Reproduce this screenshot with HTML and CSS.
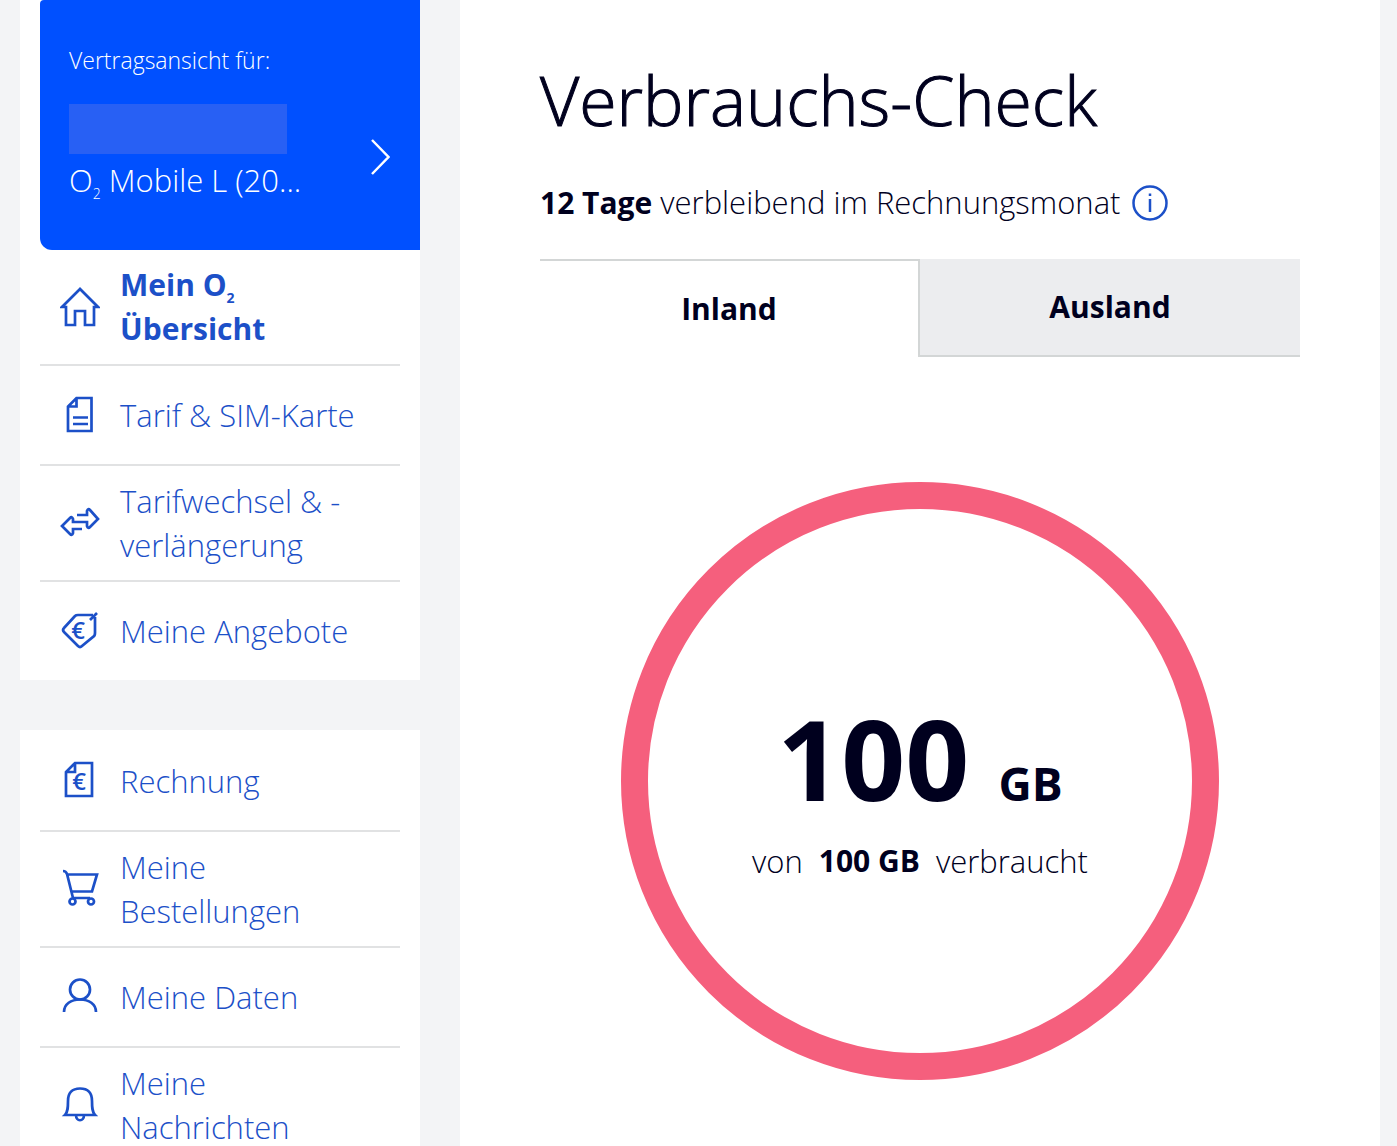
FILE: index.html
```
<!DOCTYPE html>
<html lang="de">
<head>
  <meta charset="UTF-8">
  <title>Mein O2 – Verbrauchs-Check</title>
  <meta name="viewport" content="width=device-width, initial-scale=1.0">
  <link rel="stylesheet" href="styles.css">
</head>
<body>

  <div class="layout">
    <aside class="sidebar">
      <div class="panel">
        <button class="contract" type="button">
          <span class="contract-info">
            <span class="contract-label">Vertragsansicht für:</span>
            <span class="contract-number"></span>
            <span class="contract-name">O<sub>2</sub> Mobile L (20...</span>
          </span>
          <svg class="chevron" viewBox="0 0 20 36"><path d="M2 1l16.500 17L2 35"/></svg>
        </button>

        <nav class="menu">
          <a class="menu-item active" href="#">
            <svg class="icon" viewBox="0 0 40 40"><path d="M20 2L2 20h4v18h9V24h10v14h9V20h4z"/></svg>
            <span>Mein O<sub>2</sub> Übersicht</span>
          </a>
          <a class="menu-item" href="#">
            <svg class="icon" viewBox="0 0 40 40"><path d="M16.500 3h15v33H8V11.500zV11.500H8M13 22.500h15M13 29h15"/></svg>
            <span>Tarif &amp; SIM-Karte</span>
          </a>
          <a class="menu-item" href="#">
            <svg class="icon" viewBox="0 0 40 40"><path d="M17 12h10V8q1-3 3-1l8 9-8 8q-2 2-3-1v-4H13v-3q-1-3-3-1l-8 8 8 8q2 2 3-1v-4h9"/></svg>
            <span>Tarifwechsel &amp; -verlängerung</span>
          </a>
          <a class="menu-item" href="#">
            <svg class="icon" viewBox="0 0 40 40"><path d="M37 2l-7 7M33 4H18q-2 0-3 1L4 17q-2 2 0 4l14 14q2 2 4 0l11-9q2-1 2-4V6"/><text x="18" y="28">€</text></svg>
            <span>Meine Angebote</span>
          </a>
        </nav>
      </div>

      <div class="panel panel-second">
        <nav class="menu">
          <a class="menu-item" href="#">
            <svg class="icon" viewBox="0 0 40 40"><path d="M15 2h17v33H6V11zV11H6"/><text x="19" y="29">€</text></svg>
            <span>Rechnung</span>
          </a>
          <a class="menu-item" href="#">
            <svg class="icon" viewBox="0 0 40 40"><path d="M3 2q3 0 4 3l6 24h17M7 5.500h30l-5 17H11"/><circle cx="12.500" cy="32.500" r="3"/><circle cx="31" cy="32.500" r="3"/></svg>
            <span>Meine Bestellungen</span>
          </a>
          <a class="menu-item" href="#">
            <svg class="icon" viewBox="0 0 40 40"><circle cx="20" cy="12.500" r="10"/><path d="M4 35c0-8 7-12.500 16-12.500S36 27 36 35"/></svg>
            <span>Meine Daten</span>
          </a>
          <a class="menu-item" href="#">
            <svg class="icon" viewBox="0 0 40 40"><path d="M5 30c3-3 3-8 3-14 0-8 4-12.500 12-12.500S32 8 32 16c0 6 0 11 3 14zM16 30c0 7 8 7 8 0"/></svg>
            <span>Meine Nachrichten</span>
          </a>
        </nav>
      </div>
    </aside>

    <main class="content">
      <h1>Verbrauchs-Check</h1>

      <p class="remaining">
        <span><strong>12 Tage</strong> verbleibend im Rechnungsmonat</span>
        <button class="info" type="button" aria-label="Info">
          <svg viewBox="0 0 36 36"><circle cx="18" cy="18" r="16.500"/><path d="M18 14v13M18 8.500v2.500"/></svg>
        </button>
      </p>

      <div class="tabs" role="tablist">
        <button class="tab selected" type="button" role="tab" aria-selected="true">Inland</button>
        <button class="tab" type="button" role="tab" aria-selected="false">Ausland</button>
      </div>

      <div class="usage">
        <div class="usage-value">100 <span class="usage-unit">GB</span></div>
        <div class="usage-total"><span>von</span><strong>100 GB</strong><span>verbraucht</span></div>
      </div>
    </main>
  </div>

</body>
</html>
```
FILE: styles.css
```
* {
  box-sizing: border-box;
}

body {
  margin: 0;
  height: 100vh;
  overflow: hidden;
  background: #f3f4f6;
  color: #00001e;
  font-family: "Open Sans", "Noto Sans", sans-serif;
  font-size: 31px;
  font-weight: 300;
  line-height: 44px;
}

button {
  border: 0;
  padding: 0;
  background: none;
  color: inherit;
  font: inherit;
  cursor: pointer;
}

strong {
  font-size: 30px;
  font-weight: 700;
}

svg {
  fill: none;
  stroke: currentColor;
  flex: none;
}

sub {
  font-size: 14px;
  line-height: 0;
}

.layout {
  display: grid;
  grid-template-columns: 400px 1fr;
  gap: 40px;
  min-height: 100vh;
  padding: 0 17px 0 20px;
}

.panel {
  background: #fff;
  padding-left: 20px;
}

.panel-second {
  margin-top: 50px;
  padding-top: 2px;
}

.contract {
  display: flex;
  align-items: center;
  justify-content: space-between;
  width: 100%;
  height: 250px;
  padding: 0 30px 10px 29px;
  border-radius: 4px 0 0 12px;
  background: #0050ff;
  color: #fff;
  text-align: left;
}

.contract-info {
  display: flex;
  flex-direction: column;
}

.contract-label {
  font-size: 23px;
}

.contract-number {
  width: 218px;
  height: 50px;
  margin-top: 22px;
  background: #2860f4;
}

.contract-name {
  margin-top: 4px;
}

.chevron {
  width: 20px;
  height: 36px;
  margin-top: 74px;
  stroke-width: 2.5;
}

.menu {
  margin-right: 20px;
}

.menu-item {
  display: flex;
  align-items: center;
  gap: 20px;
  min-height: 100px;
  padding: 13px 30px 13px 20px;
  border-bottom: 2px solid #e1e2e3;
  color: #1c50c8;
  text-decoration: none;
}

.menu-item:last-child {
  min-height: 98px;
  border-bottom: 0;
}

.menu-item.active {
  font-size: 30px;
  font-weight: 700;
}

.icon {
  width: 40px;
  height: 40px;
  stroke-width: 2.7;
}

.icon text {
  fill: currentColor;
  stroke: none;
  font-size: 24px;
  font-weight: 600;
  text-anchor: middle;
}

.content {
  padding: 56px 80px 0;
  background: #fff;
}

h1 {
  margin: 0;
  font-size: 68px;
  font-weight: 300;
  line-height: 88px;
  -webkit-text-stroke: 1px currentColor;
}

.remaining {
  display: flex;
  align-items: center;
  gap: 12px;
  margin: 36px 0 34px;
}

.info {
  width: 36px;
  height: 36px;
  color: #1c50c8;
}

.info svg {
  display: block;
  stroke-width: 2.5;
}

.tabs {
  display: grid;
  grid-template-columns: 1fr 1fr;
}

.tab {
  height: 98px;
  border-bottom: 2px solid #d3d6d6;
  background: #ecedef;
  font-size: 30px;
  font-weight: 700;
}

.tab.selected {
  border-top: 2px solid #d3d6d6;
  border-right: 2px solid #d3d6d6;
  border-bottom: 0;
  background: #fff;
}

.usage {
  display: flex;
  flex-direction: column;
  align-items: center;
  justify-content: center;
  width: 598px;
  height: 598px;
  margin: 125px auto 0;
  padding-top: 18px;
  border: 27px solid #f55f7d;
  border-radius: 50%;
}

.usage-value {
  font-size: 112px;
  font-weight: 700;
  line-height: 120px;
}

.usage-unit {
  font-size: 46px;
  line-height: 46px;
}

.usage-total {
  display: flex;
  gap: 16px;
  margin-top: 21px;
}
```
